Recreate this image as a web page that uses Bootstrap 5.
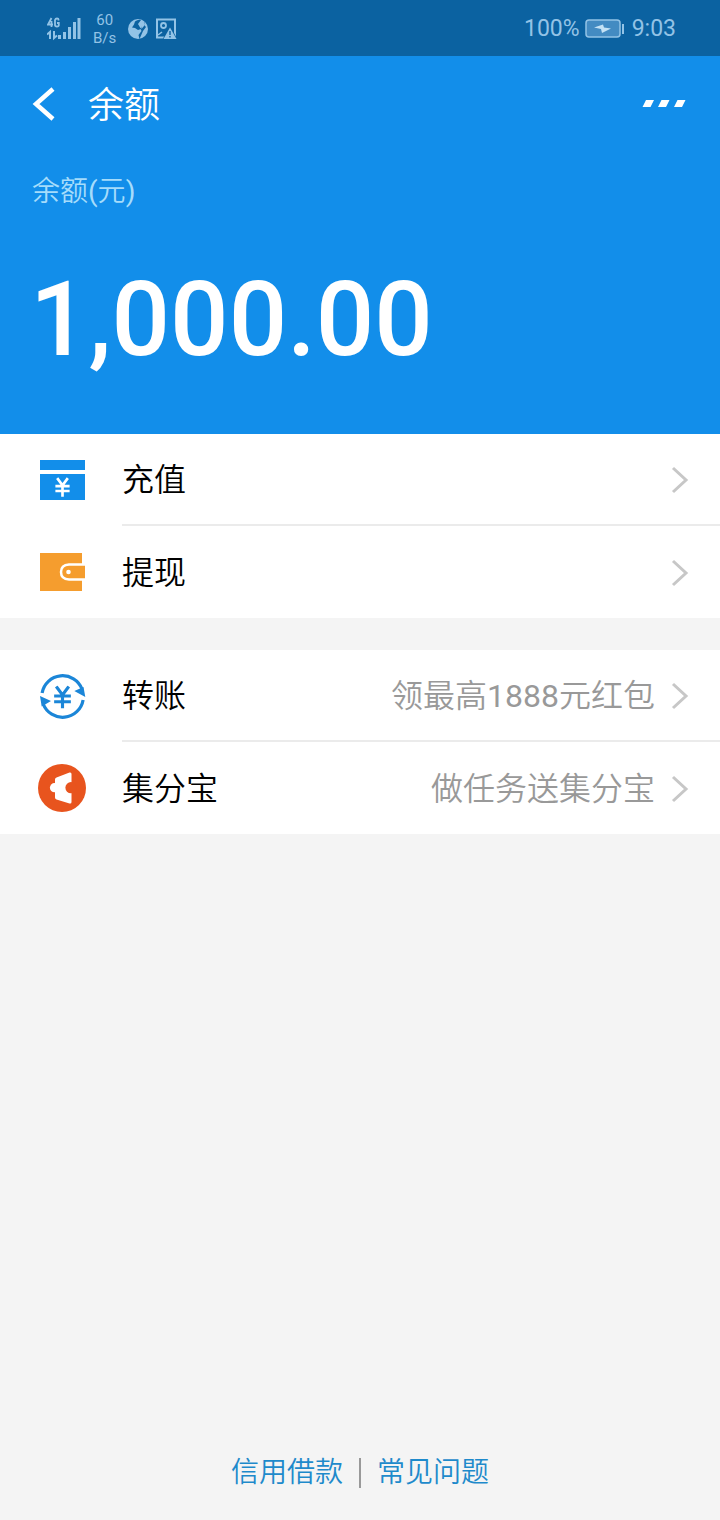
<!DOCTYPE html>
<html lang="zh-CN">
<head>
<meta charset="utf-8">
<meta name="viewport" content="width=device-width, initial-scale=1">
<title>余额</title>
<link href="https://cdn.jsdelivr.net/npm/bootstrap@5.3.0/dist/css/bootstrap.min.css" rel="stylesheet">
<style>
  body { background: #f4f4f4; color: #000; font-family: Roboto, "Noto Sans CJK SC", sans-serif; font-weight: 350; }
  svg { display: block; flex: none; }
  .status-bar { background: #0b62a1; color: #93c3e6; height: 56px; padding: 2px 44px 0 47px; font-weight: 400; font-size: 23px; line-height: 32px; }
  .net-speed { font-size: 15px; line-height: 18px; }
  .balance-head { background: #128eea; color: #fff; padding: 0 32px 48px; }
  .title-bar { height: 96px; }
  .title-bar h1 { font-size: 36px; line-height: 48px; font-weight: 350; padding-top: 4px; }
  .icon-btn { background: none; border: 0; padding: 0; color: inherit; }
  .balance-label { color: #a5dcfb; font-size: 28px; line-height: 40px; margin-top: 20px; }
  .balance-sum { font-size: 103px; line-height: 128px; font-weight: 500; margin-top: 44px; margin-left: -2px; padding-bottom: 2px; }
  .menu-row { padding-left: 32px; height: 92px; background: #fff; color: #000; text-decoration: none; font-size: 32px; line-height: 44px; }
  .menu-icon { width: 90px; padding-left: 6px; }
  .menu-body { padding: 2px 31px 0 0; }
  .menu-row:not(:last-child) .menu-body { border-bottom: 2px solid #ebebeb; }
  .menu-note { color: #999; }
  .menu-group + .menu-group { margin-top: 32px; }
  .foot-links { font-size: 28px; line-height: 40px; padding-bottom: 27px; }
  .foot-links a { color: #1e8acb; text-decoration: none; }
  .foot-rule { width: 2px; height: 30px; background: #999; }
</style>
</head>
<body class="d-flex flex-column min-vh-100">
<svg class="d-none">
  <symbol id="chevron" viewBox="0 0 18 28"><path d="M2 2l13 12L2 26" fill="none" stroke="#c7c7c7" stroke-width="3"/></symbol>
  <symbol id="yen" viewBox="0 0 18 22"><path d="M3 1l6 8 6-8M9 9v13M1 10h16M1 15.500h16" fill="none" stroke="currentColor" stroke-width="3"/></symbol>
</svg>

<div class="status-bar d-flex align-items-center justify-content-between">
  <div class="d-flex align-items-center">
    <svg width="34" height="24" viewBox="0 0 34 24" fill="none" stroke="currentColor">
      <path d="M4.500 1L1 7.500h5M4.500 4v6M11.500 3.500V2.500q0-1-1.500-1T8 3v5q0 1.500 2 1.500t1.800-1.500V6H10" stroke-width="1.800"/>
      <path d="M0 17.500l3-2.500v7M7 14v7l3-2.500" stroke-width="2"/>
      <path d="M12.500 18v4M17.500 15v7M22.500 10v12M27.500 5v17M32 1v21" stroke-width="3"/>
    </svg>
    <div class="net-speed text-center ms-2 ps-1">60<br>B/s</div>
    <svg class="ms-2 ps-1" width="24" height="20" viewBox="0 0 20 20">
      <circle cx="10" cy="10" r="10" fill="currentColor"/>
      <path d="M7 2.500q3-2.500 6-1.500L10 5l3 5-3 1-3-2-3-.5 2-3zM11.500 20l-1-4 3-4-1-2.500L17 2l-1 4 2 2-3 4z" fill="#0b62a1"/>
      <path d="M13 5l3.500-2-.5 4-2.500 3z" fill="currentColor"/>
    </svg>
    <svg class="ms-2" width="21" height="22" viewBox="0 0 21 22">
      <path d="M1 1.500h18v18H1z" fill="none" stroke="currentColor" stroke-width="2"/>
      <circle cx="7.500" cy="7.500" r="2.500" fill="none" stroke="currentColor" stroke-width="1.800"/>
      <path d="M2 17l4-3" stroke="currentColor" stroke-width="1.500"/>
      <path d="M14 7.500L21.500 21.500h-15z" fill="#0b62a1"/>
      <path d="M14 9.500L20.500 21h-13z" fill="currentColor"/>
      <path d="M14 13v4M14 18v1.500" stroke="#0b62a1" stroke-width="1.400"/>
    </svg>
  </div>
  <div class="d-flex align-items-center">
    <span>100%</span>
    <svg class="ms-1 me-2" width="40" height="20" viewBox="0 0 40 20">
      <rect x="2" y="1" width="34" height="17" rx="3" fill="#438bc2" stroke="currentColor" stroke-width="1.500"/>
      <path d="M10 8.500l9-3 1 3 7 1-9 4.500-1-4z" fill="#c4e2f5"/>
      <path d="M39 5v10" stroke="currentColor" stroke-width="2"/>
    </svg>
    <span>9:03</span>
  </div>
</div>

<header class="balance-head">
  <div class="title-bar d-flex align-items-center">
    <button type="button" class="icon-btn" aria-label="返回">
      <svg width="24" height="34" viewBox="0 0 24 34"><path d="M21 2L4 17l17 15" fill="none" stroke="#fff" stroke-width="4.500"/></svg>
    </button>
    <h1 class="mb-0 ms-4 ps-2 flex-grow-1">余额</h1>
    <button type="button" class="icon-btn" aria-label="更多">
      <svg width="46" height="8" viewBox="0 0 46 8" fill="#fff"><path d="M4 0h8L8.500 7H.5zM19.500 0h8L24 7h-8zM35.500 0h8L40 7h-8z"/></svg>
    </button>
  </div>
  <div class="balance-label">余额<span class="fw-normal">(</span>元<span class="fw-normal">)</span></div>
  <div class="balance-sum">1,000.00</div>
</header>

<main class="flex-grow-1">
  <nav class="menu-group">
    <a href="#" class="menu-row d-flex">
      <span class="menu-icon d-flex align-items-center">
        <svg width="48" height="48" viewBox="0 0 48 48">
          <path d="M2 4h45v10H2zM2 18h45v26H2z" fill="#128eea"/>
          <use href="#yen" x="16.500" y="21" width="16" height="20" color="#fff"/>
        </svg>
      </span>
      <span class="menu-body d-flex align-items-center flex-grow-1">
        <span class="flex-grow-1">充值</span>
        <svg width="18" height="28"><use href="#chevron"/></svg>
      </span>
    </a>
    <a href="#" class="menu-row d-flex">
      <span class="menu-icon d-flex align-items-center">
        <svg width="48" height="48" viewBox="0 0 48 48">
          <path d="M2 5h42v38H2z" fill="#f59d2e"/>
          <path d="M47 16.500H31q-8 .5-8 7.500t8 7.500h16" fill="#f59d2e" stroke="#fff" stroke-width="2.500"/>
          <circle cx="30.500" cy="24" r="2.300" fill="#fff"/>
        </svg>
      </span>
      <span class="menu-body d-flex align-items-center flex-grow-1">
        <span class="flex-grow-1">提现</span>
        <svg width="18" height="28"><use href="#chevron"/></svg>
      </span>
    </a>
  </nav>
  <nav class="menu-group">
    <a href="#" class="menu-row d-flex">
      <span class="menu-icon d-flex align-items-center">
        <svg width="48" height="48" viewBox="0 0 48 48">
          <g fill="none" stroke="#1b86d8" stroke-width="3.200">
            <path d="M4.100 21A20.800 20.800 0 0 1 44 17"/>
            <path d="M45.100 28A20.800 20.800 0 0 1 5.200 32"/>
          </g>
          <path d="M45.500 15l1.800 10-11-6zM3.700 34.500L2 24l11 5z" fill="#1b86d8"/>
          <use href="#yen" x="15" y="13.500" width="19" height="23" color="#1b86d8"/>
        </svg>
      </span>
      <span class="menu-body d-flex align-items-center flex-grow-1">
        <span class="flex-grow-1">转账</span>
        <span class="menu-note me-3">领最高<span class="fw-normal">1888</span>元红包</span>
        <svg width="18" height="28"><use href="#chevron"/></svg>
      </span>
    </a>
    <a href="#" class="menu-row d-flex">
      <span class="menu-icon d-flex align-items-center">
        <svg width="48" height="48" viewBox="0 0 48 48">
          <circle cx="24" cy="24" r="24" fill="#e8541e"/>
          <path d="M18.500 13.500L31.500 8.500Q33.500 8 33.500 10V38q0 2-2 1.500L18.500 35.500Q17 35 17 33.500V15.500Q17 14 18.500 13.500z" fill="#fff"/>
          <circle cx="16.500" cy="23.700" r="4.600" fill="#fff"/>
          <circle cx="33" cy="23.700" r="5.600" fill="#e8541e"/>
        </svg>
      </span>
      <span class="menu-body d-flex align-items-center flex-grow-1">
        <span class="flex-grow-1">集分宝</span>
        <span class="menu-note me-3">做任务送集分宝</span>
        <svg width="18" height="28"><use href="#chevron"/></svg>
      </span>
    </a>
  </nav>
</main>

<footer class="foot-links d-flex justify-content-center align-items-center">
  <a href="#">信用借款</a>
  <span class="foot-rule mx-3"></span>
  <a href="#">常见问题</a>
</footer>
<script src="https://cdn.jsdelivr.net/npm/bootstrap@5.3.0/dist/js/bootstrap.bundle.min.js"></script>
</body>
</html>
